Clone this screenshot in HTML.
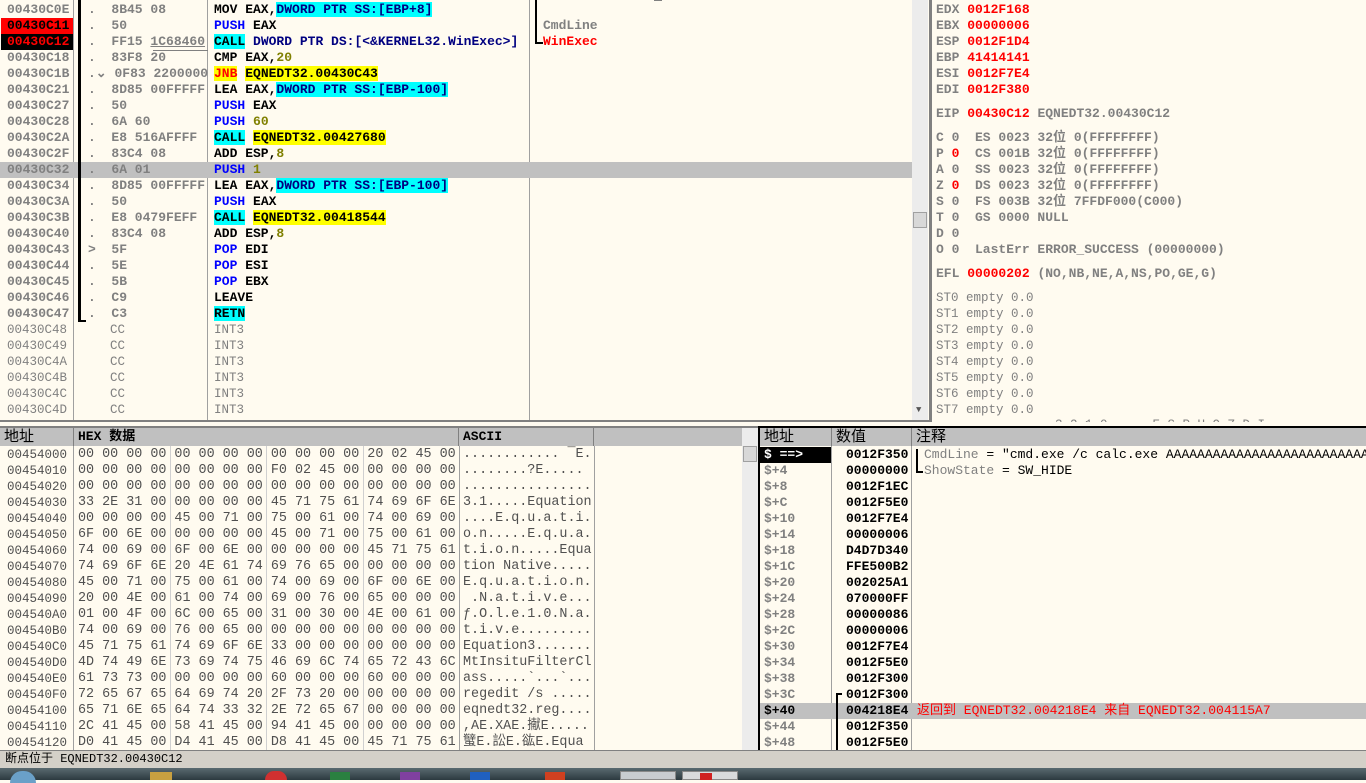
<!DOCTYPE html>
<html><head><meta charset="utf-8"><style>
*{margin:0;padding:0;box-sizing:border-box}
body{width:1366px;height:780px;overflow:hidden;background:#FFFBF0;position:relative;font-family:"Liberation Mono","Noto Sans CJK SC",monospace;font-size:13px;}
.a{position:absolute;white-space:pre;line-height:16px;height:16px}
.g{color:#808080}
.b{font-weight:bold}
.bl{color:#0000FF}
.nv{color:#000080}
.ol{color:#808000}
.cy{background:#00FFFF}
.ye{background:#FFFF00}
.rd{color:#FF0000}
.ln{position:absolute}
.hd{position:absolute;top:428px;height:18px;background:#C0C0C0;border-right:1px solid #808080;font-family:"Liberation Sans","Noto Sans CJK SC",sans-serif;font-size:15px;line-height:18px;padding-left:4px;color:#000}
.d{font-size:13.4px;color:#505050}
</style></head><body>

<!-- disasm panel -->
<div class="ln" style="left:73px;top:0;width:1px;height:420px;background:#A0A0A0"></div>
<div class="ln" style="left:207px;top:0;width:1px;height:420px;background:#A0A0A0"></div>
<div class="ln" style="left:529px;top:0;width:1px;height:420px;background:#A0A0A0"></div>
<div class="ln" style="left:0;top:162px;width:912px;height:16px;background:#C0C0C0"></div>
<div class="ln" style="left:78px;top:0;width:3px;height:322px;background:#000"></div>
<div class="ln" style="left:78px;top:320px;width:8px;height:2px;background:#000"></div>
<div class="ln" style="left:535px;top:0;width:2px;height:44px;background:#000"></div>
<div class="ln" style="left:535px;top:42px;width:8px;height:2px;background:#000"></div>
<div class="ln" style="left:153px;top:50px;width:55px;height:1px;background:#808080"></div>
<div class="ln" style="left:1px;top:18px;width:72px;height:16px;background:#FF0000"></div>
<div class="ln" style="left:1px;top:34px;width:72px;height:16px;background:#000"></div>

<div class="a g b" style="left:7px;top:2px">00430C0E
<span style="color:#000">00430C11</span>
<span class="rd">00430C12</span>
00430C18
00430C1B
00430C21
00430C27
00430C28
00430C2A
00430C2F
00430C32
00430C34
00430C3A
00430C3B
00430C40
00430C43
00430C44
00430C45
00430C46
00430C47</div>
<div class="a g" style="left:7px;top:322px;font-size:12.5px">00430C48
00430C49
00430C4A
00430C4B
00430C4C
00430C4D</div>
<div class="a g b" style="left:88px;top:2px">.  8B45 08
.  50
.  FF15 <span style="text-decoration:underline">1C68460</span>
.  83F8 20
.⌄ 0F83 2200000
.  8D85 00FFFFF
.  50
.  6A 60
.  E8 516AFFFF
.  83C4 08
.  6A 01
.  8D85 00FFFFF
.  50
.  E8 0479FEFF
.  83C4 08
&gt;  5F
.  5E
.  5B
.  C9
.  C3</div>
<div class="a g" style="left:110px;top:322px;font-size:12.5px">CC
CC
CC
CC
CC
CC</div>
<div class="a b" style="left:214px;top:2px">MOV EAX,<span class="cy nv">DWORD PTR SS:[EBP+8]</span>
<span class="bl">PUSH</span> EAX
<span class="cy">CALL</span> <span class="nv">DWORD PTR DS:[&lt;&amp;KERNEL32.WinExec&gt;]</span>
CMP EAX,<span class="ol">20</span>
<span class="ye rd">JNB</span> <span class="ye">EQNEDT32.00430C43</span>
LEA EAX,<span class="cy nv">DWORD PTR SS:[EBP-100]</span>
<span class="bl">PUSH</span> EAX
<span class="bl">PUSH</span> <span class="ol">60</span>
<span class="cy">CALL</span> <span class="ye">EQNEDT32.00427680</span>
ADD ESP,<span class="ol">8</span>
<span class="bl">PUSH</span> <span class="ol">1</span>
LEA EAX,<span class="cy nv">DWORD PTR SS:[EBP-100]</span>
<span class="bl">PUSH</span> EAX
<span class="cy">CALL</span> <span class="ye">EQNEDT32.00418544</span>
ADD ESP,<span class="ol">8</span>
<span class="bl">POP</span> EDI
<span class="bl">POP</span> ESI
<span class="bl">POP</span> EBX
LEAVE
<span class="cy">RETN</span></div>
<div class="a g" style="left:214px;top:322px;font-size:12.5px">INT3
INT3
INT3
INT3
INT3
INT3</div>
<div class="a b" style="left:543px;top:18px"><span class="g">CmdLine</span>
<span class="rd">WinExec</span></div>
<div class="ln" style="left:654px;top:0;width:8px;height:1px;background:#808080"></div>

<!-- disasm scrollbar -->
<div class="ln" style="left:912px;top:0;width:16px;height:420px;background:#ECECEC"></div>
<div class="ln" style="left:913px;top:212px;width:14px;height:16px;background:#D8D8D8;border:1px solid #A0A0A0"></div>
<div class="a" style="left:916px;top:402px;font-size:9px;color:#555">▼</div>
<div class="ln" style="left:929px;top:0;width:3px;height:428px;background:#808080"></div>

<!-- registers -->
<div class="a g b" style="left:936px;top:2px">EDX <span class="rd">0012F168</span>
EBX <span class="rd">00000006</span>
ESP <span class="rd">0012F1D4</span>
EBP <span class="rd">41414141</span>
ESI <span class="rd">0012F7E4</span>
EDI <span class="rd">0012F380</span></div>
<div class="a g b" style="left:936px;top:106px">EIP <span class="rd">00430C12</span> EQNEDT32.00430C12</div>
<div class="a g b" style="left:936px;top:130px">C 0  ES 0023 32位 0(FFFFFFFF)
P <span class="rd">0</span>  CS 001B 32位 0(FFFFFFFF)
A 0  SS 0023 32位 0(FFFFFFFF)
Z <span class="rd">0</span>  DS 0023 32位 0(FFFFFFFF)
S 0  FS 003B 32位 7FFDF000(C000)
T 0  GS 0000 NULL
D 0
O 0  LastErr ERROR_SUCCESS (00000000)</div>
<div class="a g b" style="left:936px;top:266px">EFL <span class="rd">00000202</span> (NO,NB,NE,A,NS,PO,GE,G)</div>
<div class="a g" style="left:936px;top:290px;font-size:12.5px">ST0 empty 0.0
ST1 empty 0.0
ST2 empty 0.0
ST3 empty 0.0
ST4 empty 0.0
ST5 empty 0.0
ST6 empty 0.0
ST7 empty 0.0</div>
<div class="a g" style="left:1055px;top:417px;font-size:12.5px;height:9px;overflow:hidden">3 2 1 0      E S P U O Z D I</div>

<!-- splitter -->
<div class="ln" style="left:0;top:420px;width:930px;height:2px;background:#808080"></div>
<div class="ln" style="left:0;top:422px;width:1366px;height:4px;background:#FFFBF0"></div>
<div class="ln" style="left:0;top:426px;width:758px;height:2px;background:#808080"></div>
<div class="ln" style="left:758px;top:426px;width:608px;height:2px;background:#000"></div>

<!-- dump -->
<div class="hd" style="left:0;width:74px">地址</div>
<div class="hd" style="left:74px;width:385px;font-family:'Liberation Mono','Noto Sans CJK SC',monospace;font-weight:bold;font-size:13px">HEX 数据</div>
<div class="hd" style="left:459px;width:135px;font-family:'Liberation Mono',monospace;font-weight:bold;font-size:13px">ASCII</div>
<div class="hd" style="left:594px;width:148px;border-right:none"></div>
<div class="ln" style="left:73px;top:446px;width:1px;height:304px;background:#A0A0A0"></div>
<div class="ln" style="left:170px;top:446px;width:1px;height:304px;background:#D0D0D0"></div>
<div class="ln" style="left:266px;top:446px;width:1px;height:304px;background:#D0D0D0"></div>
<div class="ln" style="left:363px;top:446px;width:1px;height:304px;background:#D0D0D0"></div>
<div class="ln" style="left:459px;top:446px;width:1px;height:304px;background:#A0A0A0"></div>
<div class="ln" style="left:594px;top:446px;width:1px;height:304px;background:#A0A0A0"></div>
<div class="ln" style="left:742px;top:428px;width:16px;height:322px;background:#ECECEC"></div>
<div class="ln" style="left:743px;top:446px;width:14px;height:16px;background:#D8D8D8;border:1px solid #A0A0A0"></div>
<div class="a d" style="left:7px;top:447px;font-size:12.5px">00454000
00454010
00454020
00454030
00454040
00454050
00454060
00454070
00454080
00454090
004540A0
004540B0
004540C0
004540D0
004540E0
004540F0
00454100
00454110
00454120</div>
<div class="a d" style="left:78px;top:447px">00 00 00 00 00 00 00 00 00 00 00 00 20 02 45 00
00 00 00 00 00 00 00 00 F0 02 45 00 00 00 00 00
00 00 00 00 00 00 00 00 00 00 00 00 00 00 00 00
33 2E 31 00 00 00 00 00 45 71 75 61 74 69 6F 6E
00 00 00 00 45 00 71 00 75 00 61 00 74 00 69 00
6F 00 6E 00 00 00 00 00 45 00 71 00 75 00 61 00
74 00 69 00 6F 00 6E 00 00 00 00 00 45 71 75 61
74 69 6F 6E 20 4E 61 74 69 76 65 00 00 00 00 00
45 00 71 00 75 00 61 00 74 00 69 00 6F 00 6E 00
20 00 4E 00 61 00 74 00 69 00 76 00 65 00 00 00
01 00 4F 00 6C 00 65 00 31 00 30 00 4E 00 61 00
74 00 69 00 76 00 65 00 00 00 00 00 00 00 00 00
45 71 75 61 74 69 6F 6E 33 00 00 00 00 00 00 00
4D 74 49 6E 73 69 74 75 46 69 6C 74 65 72 43 6C
61 73 73 00 00 00 00 00 60 00 00 00 60 00 00 00
72 65 67 65 64 69 74 20 2F 73 20 00 00 00 00 00
65 71 6E 65 64 74 33 32 2E 72 65 67 00 00 00 00
2C 41 45 00 58 41 45 00 94 41 45 00 00 00 00 00
D0 41 45 00 D4 41 45 00 D8 41 45 00 45 71 75 61</div>
<div class="a d" style="left:463px;top:447px">............ ‾E.
........?E.....
................
3.1.....Equation
....E.q.u.a.t.i.
o.n.....E.q.u.a.
t.i.o.n.....Equa
tion Native.....
E.q.u.a.t.i.o.n.
 .N.a.t.i.v.e...
ƒ.O.l.e.1.0.N.a.
t.i.v.e.........
Equation3.......
MtInsituFilterCl
ass.....`...`...
regedit /s .....
eqnedt32.reg....
,AE.XAE.擜E.....
蠥E.訟E.谹E.Equa</div>
<div class="ln" style="left:0;top:750px;width:758px;height:0"></div>

<!-- stack -->
<div class="ln" style="left:758px;top:426px;width:2px;height:324px;background:#000"></div>
<div class="hd" style="left:760px;width:72px">地址</div>
<div class="hd" style="left:832px;width:80px">数值</div>
<div class="hd" style="left:912px;width:454px;border-right:none">注释</div>
<div class="ln" style="left:831px;top:446px;width:1px;height:304px;background:#A0A0A0"></div>
<div class="ln" style="left:911px;top:446px;width:1px;height:304px;background:#A0A0A0"></div>
<div class="ln" style="left:760px;top:447px;width:71px;height:16px;background:#000"></div>
<div class="ln" style="left:760px;top:703px;width:606px;height:16px;background:#C0C0C0"></div>
<div class="ln" style="left:836px;top:693px;width:2px;height:57px;background:#000"></div>
<div class="ln" style="left:836px;top:693px;width:6px;height:2px;background:#000"></div>
<div class="ln" style="left:916px;top:449px;width:2px;height:24px;background:#000"></div>
<div class="ln" style="left:916px;top:471px;width:7px;height:2px;background:#000"></div>
<div class="a g b" style="left:764px;top:447px"><span style="color:#fff">$ ==&gt;</span>
$+4
$+8
$+C
$+10
$+14
$+18
$+1C
$+20
$+24
$+28
$+2C
$+30
$+34
$+38
$+3C
<span style="color:#000">$+40</span>
$+44
$+48</div>
<div class="a b" style="left:846px;top:447px">0012F350
00000000
0012F1EC
0012F5E0
0012F7E4
00000006
D4D7D340
FFE500B2
002025A1
070000FF
00000086
00000006
0012F7E4
0012F5E0
0012F300
0012F300
004218E4
0012F350
0012F5E0</div>
<div class="a" style="left:924px;top:447px;width:442px;overflow:hidden"><span class="g">CmdLine</span> = "cmd.exe /c calc.exe AAAAAAAAAAAAAAAAAAAAAAAAAAAA</div>
<div class="a" style="left:924px;top:463px"><span class="g">ShowState</span> = SW_HIDE</div>
<div class="a rd" style="left:917px;top:703px">返回到 EQNEDT32.004218E4 来自 EQNEDT32.004115A7</div>

<!-- status -->
<div class="ln" style="left:0;top:750px;width:1366px;height:18px;background:#D4D0C8;border-top:1px solid #808080"></div>
<div class="a" style="left:5px;top:751px;font-family:'Liberation Mono','Noto Sans CJK SC',monospace;font-size:12px">断点位于 EQNEDT32.00430C12</div>

<!-- taskbar -->
<div class="ln" style="left:0;top:768px;width:1366px;height:12px;background:linear-gradient(#5a6a70,#2c3a40)"></div>
<div class="ln" style="left:10px;top:771px;width:26px;height:12px;border-radius:13px 13px 0 0;background:#6aa0c8"></div>
<div class="ln" style="left:150px;top:772px;width:22px;height:8px;background:#c8a040"></div>
<div class="ln" style="left:265px;top:771px;width:22px;height:9px;border-radius:11px 11px 0 0;background:#d03030"></div>
<div class="ln" style="left:330px;top:772px;width:20px;height:8px;background:#2a8040"></div>
<div class="ln" style="left:400px;top:772px;width:20px;height:8px;background:#8040a0"></div>
<div class="ln" style="left:470px;top:772px;width:20px;height:8px;background:#2060c0"></div>
<div class="ln" style="left:545px;top:772px;width:20px;height:8px;background:#d04020"></div>
<div class="ln" style="left:620px;top:771px;width:56px;height:9px;background:#c8ccd0;border:1px solid #888"></div>
<div class="ln" style="left:682px;top:771px;width:56px;height:9px;background:#d8dadc;border:1px solid #888"></div>
<div class="ln" style="left:700px;top:773px;width:12px;height:7px;background:#d02020"></div>
</body></html>
